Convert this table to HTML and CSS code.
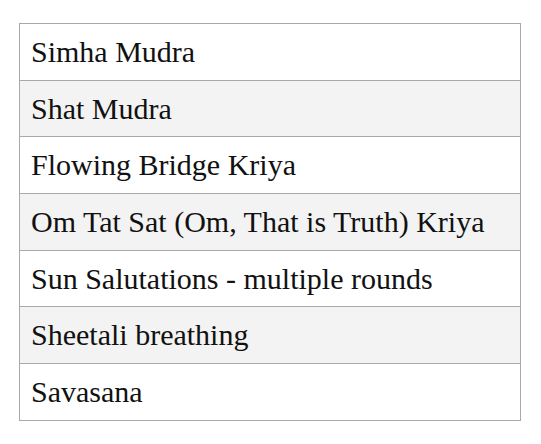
FILE: index.html
```html
<!DOCTYPE html>
<html>
<head>
<meta charset="utf-8">
<link rel="stylesheet" href="styles.css">
</head>
<body>
<table class="list">
  <tbody>
    <tr><td>Simha Mudra</td></tr>
    <tr><td>Shat Mudra</td></tr>
    <tr><td>Flowing Bridge Kriya</td></tr>
    <tr><td>Om Tat Sat (Om, That is Truth) Kriya</td></tr>
    <tr><td>Sun Salutations - multiple rounds</td></tr>
    <tr><td>Sheetali breathing</td></tr>
    <tr><td>Savasana</td></tr>
  </tbody>
</table>
</body>
</html>
```

FILE: styles.css
```css
html, body {
  margin: 0;
  padding: 0;
  background: #ffffff;
}
body {
  padding: 23px 0 0 19px;
}
.list {
  border-collapse: collapse;
  width: 502px;
  font-family: "Liberation Serif", "Times New Roman", serif;
  font-size: 30px;
  color: #111111;
}
.list td {
  border: 1px solid #a9a9a9;
  padding: 0 11px;
  height: 55.7px;
  line-height: 34px;
  text-align: left;
}
.list tr:nth-child(even) td {
  background: #f3f3f3;
}
```
